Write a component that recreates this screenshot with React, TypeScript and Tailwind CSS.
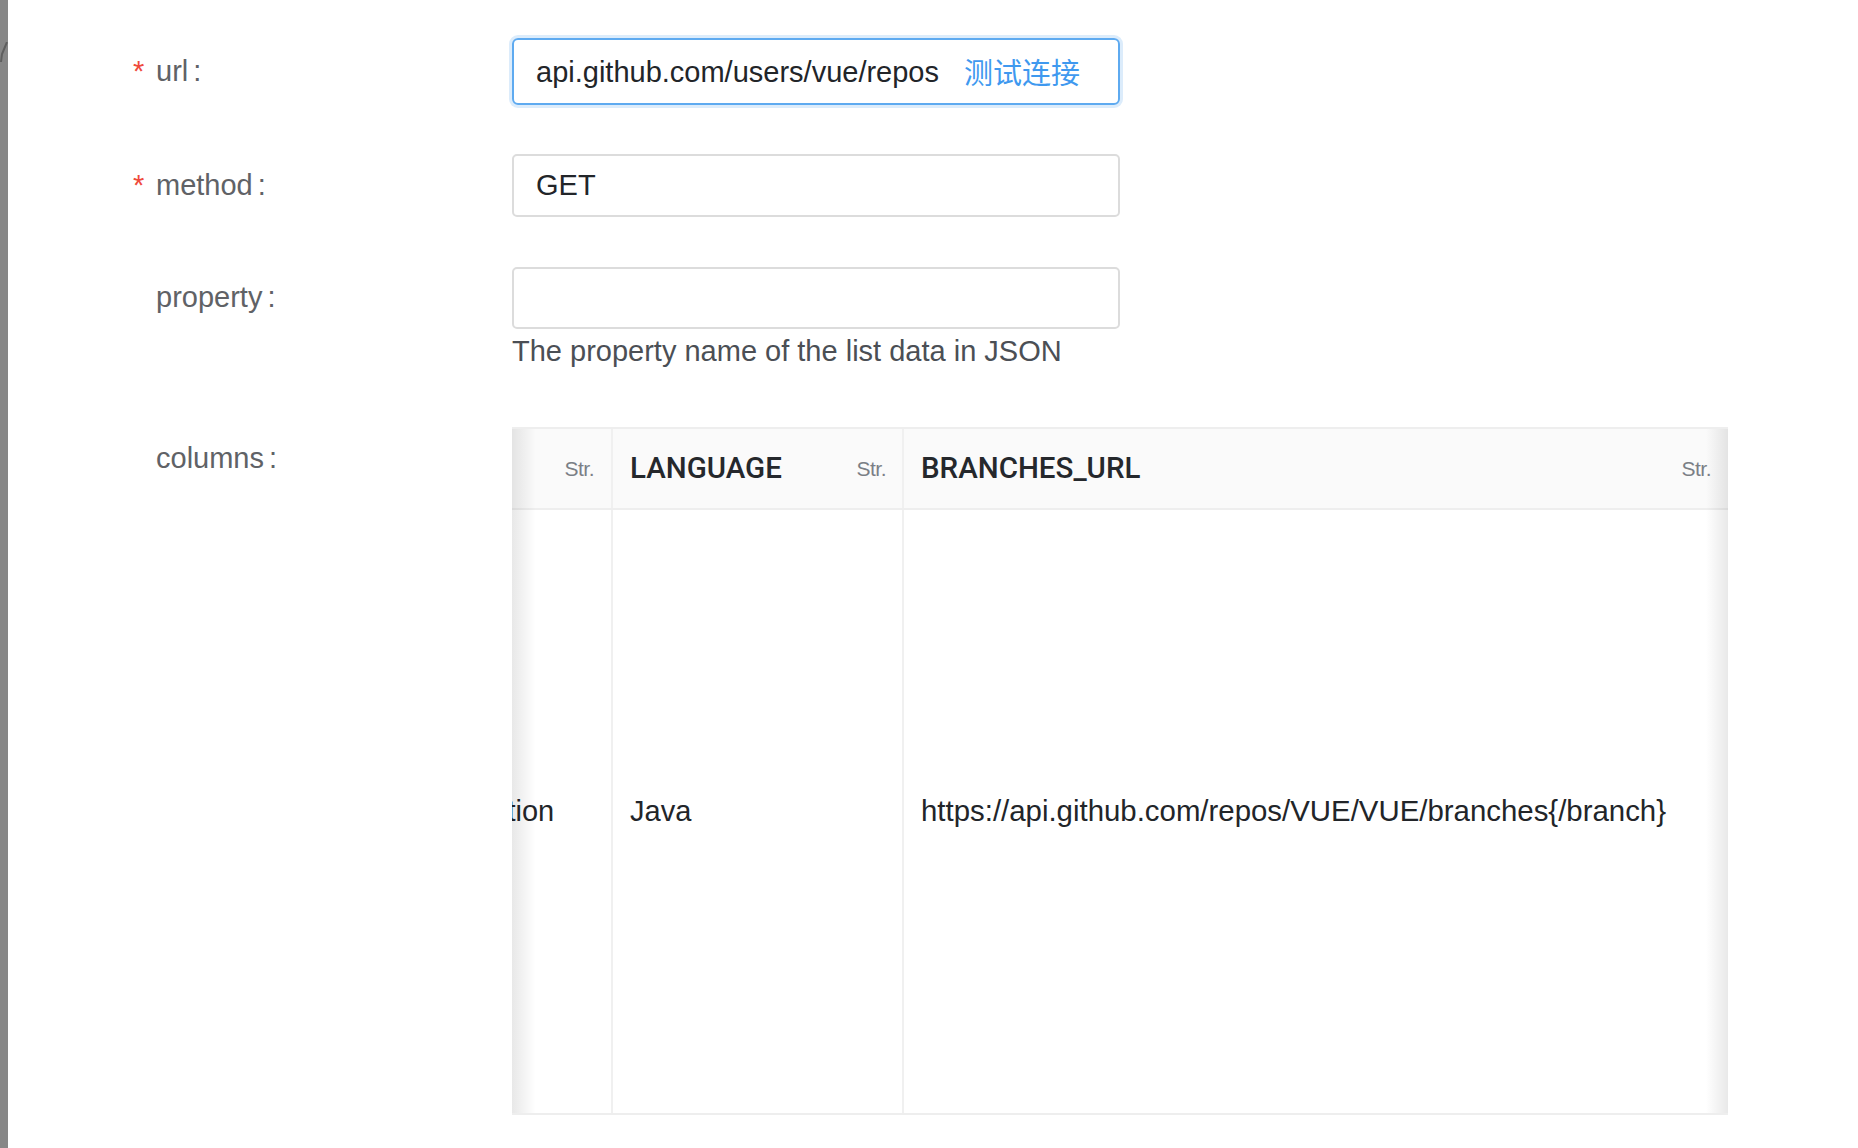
import React from "react";

const font = { fontFamily: '"Liberation Sans", "Noto Sans CJK SC", Arial, sans-serif' };
const headFont = { fontFamily: 'Roboto, "Liberation Sans", sans-serif' };

function Label({ text, required }: { text: string; required?: boolean }) {
  return (
    <div className="w-[379px] shrink-0 flex items-center text-[29px] text-[#606266]">
      <span className="w-[23px] text-[#ef4a3c]">{required ? "*" : ""}</span>
      <span>{text}</span>
      <span className="ml-[5px]">:</span>
    </div>
  );
}

export default function App() {
  return (
    <div className="min-h-screen bg-white flex" style={font}>
      {/* 왼쪽 회색 바 */}
      <div className="w-[8px] shrink-0 bg-[#878787] relative">
        <svg className="absolute left-0 top-[42px]" width="8" height="20" viewBox="0 0 8 20">
          <path d="M7 0 L2 12 L1 20" stroke="#5f5f5f" strokeWidth="2" fill="none" />
        </svg>
      </div>

      <div className="flex-1 pt-[38px] pl-[125px]">
        {/* url */}
        <div className="flex h-[67px] mb-[49px]">
          <Label text="url" required />
          <div className="w-[608px] h-[67px] rounded-[6px] border-2 border-[#5eaaf0] shadow-[0_0_0_3px_#dcecfb] flex items-center justify-between pl-[22px] pr-[38px] text-[29px] text-[#222529]">
            <span className="pt-[2px]">api.github.com/users/vue/repos</span>
            <span className="text-[#3f99ef]" style={{ fontFamily: '"Noto Sans CJK SC", sans-serif' }}>测试连接</span>
          </div>
        </div>

        {/* method */}
        <div className="flex h-[63px] mb-[50px]">
          <Label text="method" required />
          <div className="w-[608px] h-[63px] rounded-[5px] border-2 border-[#dcdcdc] flex items-center pl-[22px] text-[29px] text-[#222529]">
            GET
          </div>
        </div>

        {/* property */}
        <div className="flex mb-[52px]">
          <div className="h-[62px] flex">
            <Label text="property" />
          </div>
          <div className="flex flex-col">
            <div className="w-[608px] h-[62px] rounded-[5px] border-2 border-[#dcdcdc]" />
            <div className="h-[46px] flex items-center text-[29px] text-[#4b4f55]">
              The property name of the list data in JSON
            </div>
          </div>
        </div>

        {/* columns */}
        <div className="flex">
          <div className="h-[64px] flex">
            <Label text="columns" />
          </div>
          <div className="relative w-[1216px] h-[688px] border-t-2 border-b-2 border-[#eeeeee] flex flex-col overflow-hidden">
            <div className="grid grid-cols-[101px_291px_824px] h-[81px] bg-[#fafafa] border-b-2 border-[#eeeeee]">
              <div className="flex items-center justify-end pr-[17px] border-r-2 border-[#f0f0f0] text-[21px] text-[#7a7f86] tracking-[-0.5px]">
                Str.
              </div>
              <div className="flex items-center justify-between pl-[17px] pr-[16px] border-r-2 border-[#f0f0f0]">
                <span className="text-[29.5px] text-[#25282c] font-medium" style={headFont}>LANGUAGE</span>
                <span className="text-[21px] text-[#7a7f86] tracking-[-0.5px]">Str.</span>
              </div>
              <div className="flex items-center justify-between pl-[17px] pr-[17px]">
                <span className="text-[29.5px] text-[#25282c] font-medium" style={headFont}>BRANCHES_URL</span>
                <span className="text-[21px] text-[#7a7f86] tracking-[-0.5px]">Str.</span>
              </div>
            </div>
            <div className="grid grid-cols-[101px_291px_824px] flex-1 text-[29px] text-[#222529]">
              <div className="flex items-center border-r-2 border-[#f0f0f0] overflow-hidden">
                <span className="ml-[-98px] whitespace-nowrap">description</span>
              </div>
              <div className="flex items-center pl-[17px] border-r-2 border-[#f0f0f0]">Java</div>
              <div className="flex items-center pl-[17px] whitespace-nowrap text-[29.4px]">
                https://api.github.com/repos/VUE/VUE/branches{"{/branch}"}
              </div>
            </div>
            {/* 스크롤 그림자 */}
            <div className="absolute left-0 top-0 bottom-0 w-[24px] bg-gradient-to-r from-[rgba(0,0,0,0.09)] to-transparent pointer-events-none" />
            <div className="absolute right-0 top-0 bottom-0 w-[22px] bg-gradient-to-l from-[rgba(0,0,0,0.09)] to-transparent pointer-events-none" />
          </div>
        </div>
      </div>
    </div>
  );
}
